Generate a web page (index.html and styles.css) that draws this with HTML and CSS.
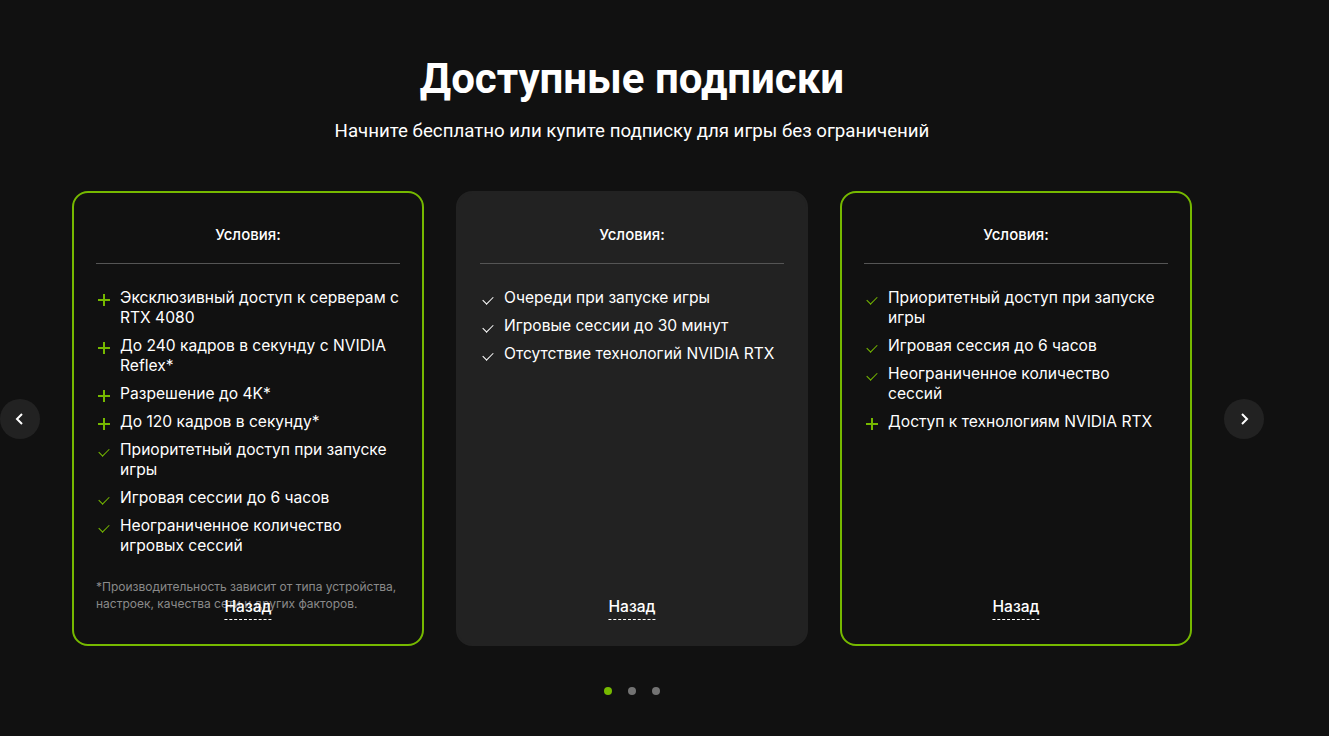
FILE: index.html
```html
<!DOCTYPE html>
<html>
	<head>
		<meta charset="utf-8">
		<title>Доступные подписки</title>
		<link rel="stylesheet" href="styles.css">
	</head>
	<body>
		<div class="wrapper">
			<h2 class="title">Доступные подписки</h2>
			<p class="subtitle">Начните бесплатно или купите подписку для игры без ограничений</p>

			<div class="slider">
				<button class="arrow">
					<svg width="14" height="14" viewBox="0 0 14 14"><path d="M9 2 L4 7 L9 12" fill="none" stroke="#fff" stroke-width="2"/></svg>
				</button>

				<div class="cards">
					<div class="card">
						<div class="cardTitle">Условия:</div>
						<ul class="list">
							<li><i class="plus"></i>Эксклюзивный доступ к серверам с RTX 4080</li>
							<li><i class="plus"></i>До 240 кадров в секунду с NVIDIA Reflex*</li>
							<li><i class="plus"></i>Разрешение до 4K*</li>
							<li><i class="plus"></i>До 120 кадров в секунду*</li>
							<li><i class="check"></i>Приоритетный доступ при запуске игры</li>
							<li><i class="check"></i>Игровая сессии до 6 часов</li>
							<li><i class="check"></i>Неограниченное количество игровых сессий</li>
						</ul>
						<p class="note">*Производительность зависит от типа устройства, настроек, качества сети и других факторов.</p>
						<a class="back">Назад</a>
					</div>

					<div class="card free">
						<div class="cardTitle">Условия:</div>
						<ul class="list">
							<li><i class="check"></i>Очереди при запуске игры</li>
							<li><i class="check"></i>Игровые сессии до 30 минут</li>
							<li><i class="check"></i>Отсутствие технологий NVIDIA RTX</li>
						</ul>
						<a class="back">Назад</a>
					</div>

					<div class="card">
						<div class="cardTitle">Условия:</div>
						<ul class="list">
							<li><i class="check"></i>Приоритетный доступ при запуске игры</li>
							<li><i class="check"></i>Игровая сессия до 6 часов</li>
							<li><i class="check"></i>Неограниченное количество сессий</li>
							<li><i class="plus"></i>Доступ к технологиям NVIDIA RTX</li>
						</ul>
						<a class="back">Назад</a>
					</div>
				</div>

				<button class="arrow">
					<svg width="14" height="14" viewBox="0 0 14 14"><path d="M5 2 L10 7 L5 12" fill="none" stroke="#fff" stroke-width="2"/></svg>
				</button>
			</div>

			<div class="dots">
				<span class="dot active"></span>
				<span class="dot"></span>
				<span class="dot"></span>
			</div>
		</div>
	</body>
</html>
```

FILE: styles.css
```css
* {
	margin: 0;
	padding: 0;
	box-sizing: border-box;
}

html,
body {
	width: 100%;
	height: 100%;
	background: #111111;
	color: #fff;
}

.wrapper {
	width: 1264px;
	padding-top: 55px;
	display: flex;
	flex-direction: column;
	align-items: center;
}

.title {
	font-family: Roboto, "Liberation Sans", sans-serif;
	font-weight: 700;
	font-size: 42px;
	line-height: 48px;
}

.subtitle {
	font-family: Roboto, "Liberation Sans", sans-serif;
	font-size: 18.7px;
	line-height: 22px;
	margin-top: 17px;
}

/* слайдер */
.slider {
	width: 100%;
	display: flex;
	align-items: center;
	gap: 32px;
	margin-top: 49px;
}

.arrow {
	flex: none;
	width: 40px;
	height: 40px;
	border-radius: 50%;
	border: none;
	background: #222222;
	display: flex;
	justify-content: center;
	align-items: center;
}

.cards {
	display: flex;
	gap: 32px;
}

.card {
	position: relative;
	width: 352px;
	height: 455px;
	border: 2px solid #76b900;
	border-radius: 16px;
	padding: 32px 22px 0;
	font-family: Inter, "Noto Sans", sans-serif;
}

.card.free {
	background: #222222;
	border-color: #222222;
}

.cardTitle {
	font-size: 15px;
	font-weight: 500;
	line-height: 20px;
	text-align: center;
	padding-bottom: 18px;
	border-bottom: 1px solid #555555;
}

.list {
	list-style: none;
	margin-top: 24px;
	display: flex;
	flex-direction: column;
	gap: 8px;
}

.list li {
	display: flex;
	font-size: 15.6px;
	line-height: 20px;
}

.list li i {
	flex: none;
	width: 12px;
	height: 12px;
	margin: 6px 10px 0 2px;
	position: relative;
}

.plus::before,
.plus::after {
	content: '';
	position: absolute;
	background: #76b900;
}

.plus::before {
	left: 0;
	top: 5px;
	width: 12px;
	height: 1.5px;
}

.plus::after {
	left: 5px;
	top: 0;
	width: 1.5px;
	height: 12px;
}

.check::before {
	content: '';
	position: absolute;
	left: 3px;
	top: 0;
	width: 5px;
	height: 9px;
	border-right: 1.5px solid #76b900;
	border-bottom: 1.5px solid #76b900;
	transform: rotate(45deg);
}

.free .check::before {
	border-color: #fff;
}

.note {
	margin-top: 22px;
	font-size: 12px;
	line-height: 17px;
	color: #8a8a8a;
}

/* кнопка поверх текста */
.back {
	position: absolute;
	left: 50%;
	bottom: 24px;
	transform: translateX(-50%);
	font-size: 15.6px;
	font-weight: 500;
	line-height: 20px;
	border-bottom: 1px dashed #fff;
	padding-bottom: 2px;
}

.dots {
	display: flex;
	gap: 16px;
	margin-top: 41px;
}

.dot {
	width: 8px;
	height: 8px;
	border-radius: 50%;
	background: #737373;
}

.dot.active {
	background: #76b900;
}
```
